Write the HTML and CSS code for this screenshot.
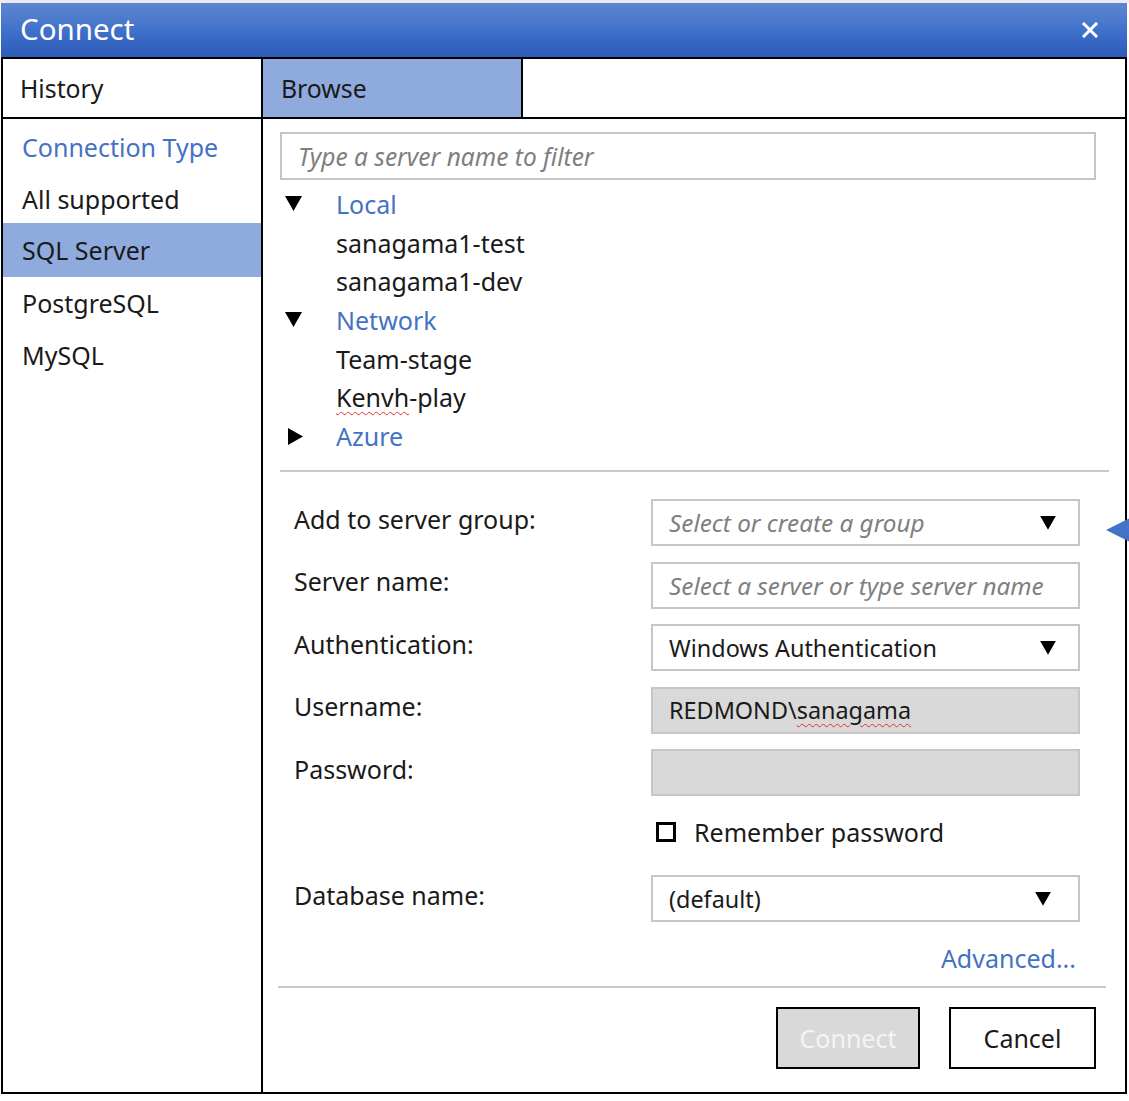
FILE: index.html
```html
<!DOCTYPE html>
<html lang="en">
<head>
<meta charset="utf-8">
<title>Connect</title>
<link rel="stylesheet" href="styles.css">
</head>
<body>
<div class="page">
  <div class="dialog">
    <div class="titlebar">
      <span class="title">Connect</span>
      <svg class="close" width="16" height="16" viewBox="0 0 16 16" aria-hidden="true">
        <path d="M2 2 L14 14 M14 2 L2 14" stroke="#ffffff" stroke-width="3" stroke-linecap="square" fill="none"/>
      </svg>
    </div>
    <div class="frame">
      <div class="tabs">
        <div class="tab">History</div>
        <div class="tab active">Browse</div>
      </div>
      <div class="content">
        <aside class="sidebar">
          <div class="side-item heading">Connection Type</div>
          <div class="side-item">All supported</div>
          <div class="side-item selected">SQL Server</div>
          <div class="side-item">PostgreSQL</div>
          <div class="side-item">MySQL</div>
        </aside>
        <main class="main">
          <div class="filter">Type a server name to filter</div>
          <ul class="tree">
            <li class="node group"><span class="caret down"></span><span class="label">Local</span></li>
            <li class="node"><span class="caret"></span><span class="label">sanagama1-test</span></li>
            <li class="node"><span class="caret"></span><span class="label">sanagama1-dev</span></li>
            <li class="node group"><span class="caret down"></span><span class="label">Network</span></li>
            <li class="node"><span class="caret"></span><span class="label">Team-stage</span></li>
            <li class="node"><span class="caret"></span><span class="label"><span class="spell">Kenvh</span>-play</span></li>
            <li class="node group"><span class="caret right"></span><span class="label">Azure</span></li>
          </ul>
          <div class="sep"></div>
          <div class="form">
            <div class="field-label">Add to server group:</div>
            <div class="field select"><span class="placeholder">Select or create a group</span><span class="arrow"></span></div>

            <div class="field-label">Server name:</div>
            <div class="field"><span class="placeholder">Select a server or type server name</span></div>

            <div class="field-label">Authentication:</div>
            <div class="field select"><span class="value">Windows Authentication</span><span class="arrow"></span></div>

            <div class="field-label">Username:</div>
            <div class="field disabled"><span class="value">REDMOND\<span class="spell">sanagama</span></span></div>

            <div class="field-label">Password:</div>
            <div class="field disabled"></div>

            <div class="field-label"></div>
            <div class="check-row"><span class="checkbox"></span><span class="check-text">Remember password</span></div>

            <div class="field-label db">Database name:</div>
            <div class="field select db"><span class="value">(default)</span><span class="arrow db-arrow"></span></div>
          </div>
          <div class="advanced-row"><span class="advanced">Advanced...</span></div>
          <div class="sep sep2"></div>
          <div class="buttons">
            <div class="btn disabled-btn">Connect</div>
            <div class="btn">Cancel</div>
          </div>
        </main>
      </div>
    </div>
    <div class="pointer"></div>
  </div>
</div>
</body>
</html>
```

FILE: styles.css
```css
* { box-sizing: border-box; }

html, body {
  margin: 0;
  padding: 0;
  background: #ffffff;
}

body {
  font-family: "Noto Sans", "Open Sans", "DejaVu Sans", sans-serif;
  color: #1a1a1a;
}

.page {
  border-top: 3px solid #ececec;
  width: 1129px;
  height: 1101px;
}

.dialog {
  position: relative;
  margin-left: 1px;
  width: 1126px;
}

.titlebar {
  height: 54px;
  background: linear-gradient(#5f86d0 0%, #4374cc 45%, #3565c2 75%, #2e5db8 100%);
  display: flex;
  align-items: center;
  justify-content: space-between;
  padding: 0 29px 0 19px;
}

.title {
  color: #ffffff;
  font-size: 29.5px;
  line-height: 1;
  margin-top: -3px;
}

.close {
  display: block;
}

.frame {
  border: 2px solid #000000;
  height: 1037px;
  display: flex;
  flex-direction: column;
}

.tabs {
  display: flex;
  height: 60px;
  border-bottom: 2px solid #000000;
}

.tab {
  width: 260px;
  border-right: 2px solid #000000;
  font-size: 24.8px;
  display: flex;
  align-items: center;
  padding-left: 17px;
  padding-top: 0;
}

.tab.active {
  background: #8faadc;
  padding-left: 18px;
}

.content {
  flex: 1;
  display: flex;
}

.sidebar {
  width: 260px;
  border-right: 2px solid #000000;
  padding-top: 2px;
}

.side-item {
  height: 52px;
  display: flex;
  align-items: center;
  padding-left: 19px;
  font-size: 25px;
}

.side-item.heading {
  color: #4472c4;
}

.side-item.selected {
  background: #8faadc;
  height: 54px;
  margin-top: -2px;
  padding-top: 0;
}

.main {
  flex: 1;
  padding: 13px 0 0 17px;
}

.filter {
  width: 816px;
  height: 48px;
  border: 2px solid #c6c6c6;
  display: flex;
  align-items: center;
  padding-left: 16px;
  font-style: italic;
  font-size: 24.5px;
  color: #7f7f7f;
}

.tree {
  list-style: none;
  margin: 4.7px 0 0 0;
  padding: 0;
}

.node {
  height: 38.67px;
  display: flex;
  align-items: center;
  font-size: 25px;
}

.node.group .label {
  color: #4472c4;
}

.caret {
  width: 56px;
  height: 16px;
  position: relative;
  flex: none;
}

.caret.down::before {
  content: "";
  position: absolute;
  left: 5px;
  top: 0;
  width: 17px;
  height: 15px;
  background: #000000;
  clip-path: polygon(0 0, 100% 0, 50% 100%);
}

.caret.right::before {
  content: "";
  position: absolute;
  left: 8px;
  top: 0;
  width: 15px;
  height: 17px;
  background: #000000;
  clip-path: polygon(0 0, 100% 50%, 0 100%);
}

.spell {
  text-decoration: underline wavy #e03030;
  text-decoration-thickness: 1px;
  text-underline-offset: 4px;
}

.sep {
  width: 829px;
  height: 2px;
  background: #c8c8c8;
  margin-top: 15px;
}

.form {
  display: grid;
  grid-template-columns: 357px 429px;
  row-gap: 15.5px;
  margin-top: 27px;
  padding-left: 14px;
}

.field-label {
  display: flex;
  align-items: center;
  font-size: 25px;
  padding-bottom: 8px;
}

.field {
  height: 47px;
  border: 2px solid #c6c6c6;
  display: flex;
  align-items: center;
  justify-content: space-between;
  padding: 0 22px 0 16px;
  font-size: 23.4px;
}

.field.disabled {
  background: #d9d9d9;
}

.placeholder {
  font-style: italic;
  color: #7f7f7f;
  font-size: 24.3px;
  white-space: nowrap;
}

.arrow {
  width: 16px;
  height: 14px;
  background: #000000;
  clip-path: polygon(0 0, 100% 0, 50% 100%);
  flex: none;
}

.db-arrow {
  margin-right: 5px;
}

.field-label.db,
.field.db {
  margin-top: 8px;
}

.check-row {
  height: 40px;
  display: flex;
  align-items: center;
  padding-left: 5px;
}

.checkbox {
  width: 20px;
  height: 20px;
  border: 3px solid #000000;
  flex: none;
}

.check-text {
  margin-left: 18px;
  font-size: 25px;
}

.advanced-row {
  width: 796px;
  display: flex;
  justify-content: flex-end;
  height: 32px;
  align-items: center;
  margin-top: 20px;
}

.advanced {
  color: #4472c4;
  font-size: 25px;
}

.sep2 {
  width: 828px;
  margin-left: -2px;
  margin-top: 12px;
}

.buttons {
  width: 816px;
  display: flex;
  justify-content: flex-end;
  gap: 29px;
  margin-top: 19px;
}

.btn {
  height: 62px;
  width: 147px;
  border: 2px solid #000000;
  display: flex;
  align-items: center;
  justify-content: center;
  font-size: 25px;
  background: #ffffff;
}

.btn.disabled-btn {
  width: 144px;
  background: #d9d9d9;
  color: #f4f4f4;
}

.pointer {
  position: absolute;
  left: 1105px;
  top: 515px;
  width: 24px;
  height: 24px;
  background: #4472c4;
  clip-path: polygon(0 50%, 100% 0, 100% 100%);
}
```
